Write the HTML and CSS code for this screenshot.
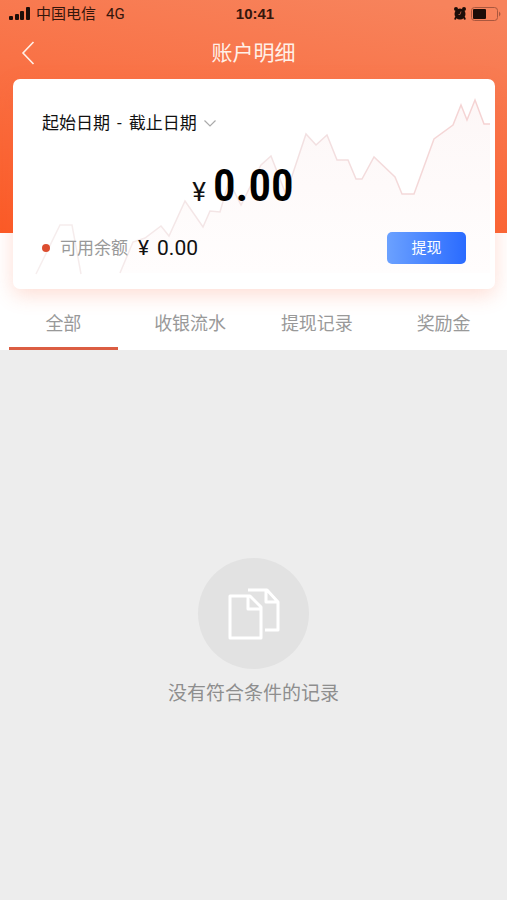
FILE: index.html
```html
<!DOCTYPE html>
<html lang="zh-CN">
<head>
<meta charset="utf-8">
<meta name="viewport" content="width=device-width, initial-scale=1">
<title>账户明细</title>
<link rel="stylesheet" href="styles.css">
</head>
<body>
<div class="top">
  <div class="status">
    <div class="status-left">
      <svg width="22" height="14" viewBox="0 0 22 14" aria-hidden="true"><rect x="0" y="9" width="4" height="4" rx="1"/><rect x="6" y="7" width="4" height="6" rx="1"/><rect x="11" y="4" width="4" height="9" rx="1"/><rect x="17" y="0" width="4" height="13" rx="1"/></svg>
      <span>中国电信</span>
      <span class="network">4G</span>
    </div>
    <span class="time">10:41</span>
    <div class="status-right">
      <svg width="12" height="13" viewBox="0 0 12 13" aria-hidden="true"><circle cx="6" cy="7" r="5.500"/><circle cx="2" cy="2" r="2"/><circle cx="10" cy="2" r="2"/><path d="M2 10L1 12.500M10 10l1 2.500" stroke="#1d0d08" stroke-width="2"/><path d="M7 4.500L6 7.500L4.500 7.500" fill="none" stroke="#a9573e"/></svg>
      <svg width="30" height="14" viewBox="0 0 30 14" aria-hidden="true"><rect x=".5" y=".5" width="26" height="13" rx="3" fill="none" stroke="#a9573e"/><rect x="2" y="2" width="13" height="10" rx="1"/><path d="M28 4.500q3 2.500 0 5z" fill="#a9573e"/></svg>
    </div>
  </div>
  <header class="nav">
    <button class="back" type="button" aria-label="返回"><svg width="14" height="24" viewBox="0 0 14 24"><path d="M12.500 1L2 12l10.500 11" fill="none" stroke="#fff0e8" stroke-width="1.600"/></svg></button>
    <h1>账户明细</h1>
  </header>
</div>
<main>
  <section class="card">
    <svg class="chart" viewBox="0 0 482 210" preserveAspectRatio="none" aria-hidden="true">
      <defs><linearGradient id="line"><stop offset="0" stop-color="#f6eeee"/><stop offset=".6" stop-color="#f2e0e1"/><stop offset="1" stop-color="#f5d2d2"/></linearGradient>
      <linearGradient id="area" x2="0" y2="1"><stop offset="0" stop-color="#fdf7f7"/><stop offset="1" stop-color="#fffdfd"/></linearGradient></defs>
      <path fill="url(#area)" d="M107 194L120 163L132 159L148 147L156 157L172 122L190 148L197 132L207 133L216 102L228 126L248 86L258 77L272 113L279 97L293 55L303 66L314 56L324 81L335 81L343 100L349 100L361 78L382 98L389 115L401 115L421 60L440 46L448 26L454 41L462 21L471 45L477 45V194Z"/>
      <path fill="none" stroke="url(#line)" stroke-width="1.500" d="M23 195L47 146L59 146L68 195M107 194L120 163L132 159L148 147L156 157L172 122L190 148L197 132L207 133L216 102L228 126L248 86L258 77L272 113L279 97L293 55L303 66L314 56L324 81L335 81L343 100L349 100L361 78L382 98L389 115L401 115L421 60L440 46L448 26L454 41L462 21L471 45L477 45"/>
    </svg>
    <button class="dates" type="button"><span>起始日期</span><span>-</span><span>截止日期</span><svg width="12" height="7" viewBox="0 0 12 7" aria-hidden="true"><path d="M.5.500L6 6L11.500.500" fill="none" stroke="#aaa" stroke-width="1.200"/></svg></button>
    <p class="total"><span class="yen">¥</span><strong>0.00</strong></p>
    <div class="balance">
      <span class="dot"></span>
      <span class="label">可用余额</span>
      <span class="amount"><span>¥</span><span>0.00</span></span>
      <button class="withdraw" type="button">提现</button>
    </div>
  </section>
  <nav class="tabs">
    <a class="active" href="#all">全部</a>
    <a href="#cash">收银流水</a>
    <a href="#withdrawals">提现记录</a>
    <a href="#rewards">奖励金</a>
  </nav>
  <section class="empty">
    <div class="empty-icon">
      <svg width="52" height="52" viewBox="0 0 52 52" fill="none" stroke="#fff" stroke-width="3" stroke-linejoin="round" aria-hidden="true"><path d="M2 8h20l11 11v31H2zM20 8v13h13M20 2h19l11 12v28H37M38 2v12h12"/></svg>
    </div>
    <p>没有符合条件的记录</p>
  </section>
</main>
</body>
</html>
```
FILE: styles.css
```css
* { box-sizing: border-box; }
body {
  margin: 0;
  min-height: 100vh;
  display: flex;
  flex-direction: column;
  background: #fff;
  color: #111;
  font-family: Roboto, "Noto Sans CJK SC", sans-serif;
}
h1, p { margin: 0; }
button { border: 0; padding: 0; background: none; color: inherit; font: inherit; }
svg { display: block; flex: none; }
.top {
  height: 233px;
  background: linear-gradient(190deg, #f7835c 5%, #f97246 45%, #fb5a26 100%);
}
.status {
  display: grid;
  grid-template-columns: 1fr auto 1fr;
  align-items: center;
  height: 27px;
  padding: 0 6px 0 9px;
  color: #35160c;
  font-size: 15px;
}
.status-left, .status-right { display: flex; align-items: center; gap: 5px; }
.status-left { line-height: 20px; }
.status-left svg, .status-right svg { fill: #1d0d08; }
.status-right { justify-content: flex-end; }
.network { margin-left: 5px; }
.time { font-family: "Liberation Sans", sans-serif; font-weight: 700; }
.nav {
  display: grid;
  grid-template-columns: 48px 1fr 48px;
  align-items: center;
  height: 52px;
}
.back { display: flex; padding-left: 21px; }
h1 { color: #fff0e8; font-size: 21px; font-weight: 400; line-height: 30px; text-align: center; }
main { flex: 1; display: flex; flex-direction: column; margin-top: -154px; }
.card {
  position: relative;
  margin: 0 12px 0 13px;
  padding: 29px 29px 25px;
  border-radius: 7px;
  background: #fff;
  box-shadow: 0 6px 20px rgba(252, 100, 60, .22);
}
.chart { position: absolute; inset: 0; width: 100%; height: 100%; }
.dates, .total, .balance { position: relative; }
.dates { display: flex; align-items: center; gap: 7px; font-size: 17px; line-height: 30px; }
.total {
  display: flex;
  justify-content: center;
  align-items: baseline;
  gap: 7px;
  height: 64px;
  margin-top: 16px;
  padding-right: 22px;
  line-height: 64px;
}
.yen { font-size: 26px; }
.total strong { color: #000; font-family: "Roboto Condensed", sans-serif; font-size: 45px; font-weight: 600; }
.balance { display: flex; align-items: center; margin-top: 14px; line-height: 30px; }
.dot { width: 8px; height: 8px; border-radius: 50%; background: #dc4e30; }
.label { margin-left: 10px; color: #999; font-size: 17px; }
.amount { display: flex; gap: 8px; margin-left: 10px; font-size: 21px; }
.withdraw {
  width: 79px;
  height: 32px;
  margin-left: auto;
  border-radius: 5px;
  background: linear-gradient(90deg, #6ba1ff, #2a6bff);
  color: #fff;
  font-size: 15px;
}
.tabs { display: grid; grid-template-columns: repeat(4, 1fr); height: 61px; }
.tabs a {
  display: flex;
  justify-content: center;
  margin: 0 9px;
  padding-top: 20px;
  border-bottom: 3px solid transparent;
  color: #999;
  font-size: 18px;
  line-height: 30px;
  text-decoration: none;
  white-space: nowrap;
}
.tabs .active { border-color: #db5d42; }
.empty {
  flex: 1;
  display: flex;
  flex-direction: column;
  align-items: center;
  padding-top: 208px;
  background: #ededed;
}
.empty-icon { display: grid; place-items: center; width: 111px; height: 111px; border-radius: 50%; background: #e2e2e2; }
.empty p { margin-top: 10px; color: #8e8e8e; font-size: 19px; line-height: 30px; }
```
